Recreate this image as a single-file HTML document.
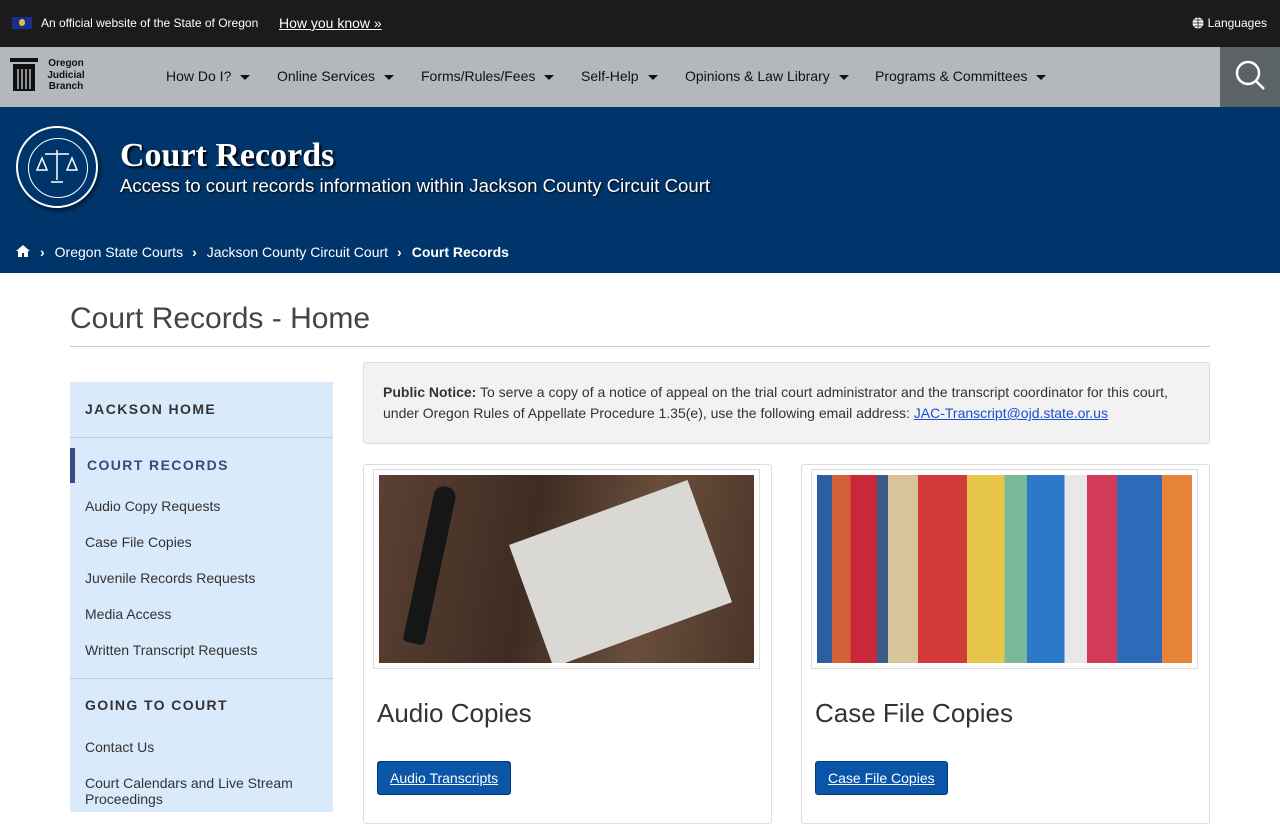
<!DOCTYPE html>
<html><head><meta charset="utf-8"><style>
*{box-sizing:border-box;margin:0;padding:0}
body{width:1280px;height:800px;overflow:hidden;font-family:"Liberation Sans",Arial,sans-serif;background:#fff;color:#333}
.top{height:47px;background:#1b1b1b;color:#fff;position:relative;font-size:12px}
.top .flag{position:absolute;left:12px;top:17px;width:20px;height:12px;background:#1a2f8c}
.top .flag:after{content:"";position:absolute;left:7px;top:2px;width:6px;height:7px;background:#e0c040;border-radius:50%}
.top .off{position:absolute;left:41px;top:16px}
.top .how{position:absolute;left:279px;top:15px;font-size:14px;text-decoration:underline}
.top .lang{position:absolute;right:13px;top:16px}
.nav{height:60px;background:#b2b8bb;position:relative;font-size:14px;color:#111}
.nav .logo{position:absolute;left:10px;top:11px}
.nav .lt{position:absolute;left:45px;top:11px;font-size:10px;font-weight:bold;line-height:11.5px;text-align:center;width:42px}
.nav .item{position:absolute;top:21px}
.nav .item:after{content:"";display:inline-block;margin-left:9px;border:5px solid transparent;border-top:5px solid #111;border-bottom:0;vertical-align:middle}
.srch{position:absolute;right:0;top:0;width:60px;height:60px;background:#5c6366}
.banner{height:166px;background:#00356b;position:relative;color:#fff}
.seal{position:absolute;left:16px;top:19px;width:82px;height:82px;border-radius:50%;border:2px solid #fff;box-shadow:2px 3px 4px rgba(0,0,0,.5)}
.seal:before{content:"";position:absolute;left:10px;top:10px;width:58px;height:58px;border-radius:50%;border:1px solid #fff}
.banner h1{position:absolute;left:120px;top:30px;font-family:"Liberation Serif",serif;font-size:34px;font-weight:bold;text-shadow:2px 2px 2px #000}
.banner .s{position:absolute;left:120px;top:68px;font-size:18.6px;text-shadow:1px 1px 2px #000}
.bc{position:absolute;left:15px;top:137px;font-size:14px}
.bc .ch{margin:0 10px 0 9px;font-size:14px;font-weight:bold}
h2.page{position:absolute;left:70px;top:302px;font-size:30px;font-weight:normal;color:#444}
.hr{position:absolute;left:70px;top:346px;width:1140px;height:1px;background:#ccc}
.side{position:absolute;left:70px;top:382px;width:263px;height:430px;background:#d9eafb;font-size:14px;color:#333}
.side .h{position:absolute;left:15px;font-weight:bold;letter-spacing:1.4px;font-size:14px;color:#333}
.side .l{position:absolute;left:15px}
.side .sep{position:absolute;left:0;width:263px;height:1px;background:#b8cbe0}
.notice{position:absolute;left:363px;top:362px;width:847px;height:82px;background:#f2f2f2;border:1px solid #ddd;border-radius:3px;padding:19px 19px;font-size:14px;line-height:21px;color:#333}
.notice a{color:#1a4fd0}
.card{position:absolute;top:464px;width:409px;height:360px;border:1px solid #ddd;border-radius:3px}
.card .im{position:absolute;left:9px;top:4px;width:387px;height:200px;border:1px solid #ddd;padding:5px}
.card .im>div{width:100%;height:100%;overflow:hidden;position:relative}
.card h3{position:absolute;left:13px;top:233px;font-size:26px;font-weight:normal;color:#333}
.btn{position:absolute;left:13px;top:296px;padding:8px 12px;background:#0a55a8;color:#fff;font-size:14px;text-decoration:underline;border:1px solid #043a78;border-radius:3px}
</style></head><body>
<div class="top"><div class="flag"></div><div class="off">An official website of the State of Oregon</div><div class="how">How you know »</div>
<div class="lang"><svg width="12" height="12" viewBox="0 0 12 12" style="vertical-align:-2px;margin-right:4px"><circle cx="6" cy="6" r="5.5" fill="#fff"/><path d="M0.5 6h11M6 .5v11M2 3h8M2 9h8" stroke="#1b1b1b" stroke-width=".8"/></svg>Languages</div></div>
<div class="nav">
<svg class="logo" width="30" height="36" viewBox="0 0 30 36"><rect x="0" y="0" width="28" height="4" fill="#111"/><rect x="3" y="6" width="22" height="3" fill="#111"/><rect x="3" y="9" width="22" height="24" fill="#111"/><path d="M8 11v20M12 11v20M16 11v20M20 11v20" stroke="#b2b8bb" stroke-width="1.5"/></svg>
<div class="lt">Oregon Judicial Branch</div>
<div class="item" style="left:166px">How Do I?</div>
<div class="item" style="left:277px">Online Services</div>
<div class="item" style="left:421px">Forms/Rules/Fees</div>
<div class="item" style="left:581px">Self-Help</div>
<div class="item" style="left:685px">Opinions &amp; Law Library</div>
<div class="item" style="left:875px">Programs &amp; Committees</div>
<div class="srch"><svg width="60" height="60" viewBox="0 0 60 60"><circle cx="28" cy="26" r="11" fill="none" stroke="#fff" stroke-width="2.5"/><path d="M36 34l8 8" stroke="#fff" stroke-width="2.5"/></svg></div>
</div>
<div class="banner">
<div class="seal"><svg width="78" height="78" viewBox="0 0 78 78" style="position:absolute;left:0;top:0"><path d="M39 22v30M27 26h24M24 30l-5 12h10zM54 30l-5 12h10zM33 54h12" stroke="#fff" stroke-width="1.5" fill="none"/></svg></div>
<h1>Court Records</h1>
<div class="s">Access to court records information within Jackson County Circuit Court</div>
<div class="bc"><svg width="16" height="14" viewBox="0 0 16 14" style="vertical-align:-1px"><path d="M8 1L1 7h2v6h4V9h2v4h4V7h2z" fill="#fff"/></svg><span class="ch">›</span>Oregon State Courts<span class="ch">›</span>Jackson County Circuit Court<span class="ch">›</span><b>Court Records</b></div>
</div>
<h2 class="page">Court Records - Home</h2><div class="hr"></div>
<div class="side">
<div class="h" style="top:19px">JACKSON HOME</div>
<div class="sep" style="top:55px"></div>
<div style="position:absolute;left:0;top:66px;width:5px;height:35px;background:#3a4a8a"></div>
<div class="h" style="top:75px;left:17px;color:#3a4a7a">COURT RECORDS</div>
<div class="l" style="top:116px">Audio Copy Requests</div>
<div class="l" style="top:152px">Case File Copies</div>
<div class="l" style="top:188px">Juvenile Records Requests</div>
<div class="l" style="top:224px">Media Access</div>
<div class="l" style="top:260px">Written Transcript Requests</div>
<div class="sep" style="top:296px"></div>
<div class="h" style="top:315px">GOING TO COURT</div>
<div class="l" style="top:357px">Contact Us</div>
<div class="l" style="top:393px;line-height:16px">Court Calendars and Live Stream<br>Proceedings</div>
</div>
<div class="notice"><b>Public Notice:</b> To serve a copy of a notice of appeal on the trial court administrator and the transcript coordinator for this court, under Oregon Rules of Appellate Procedure 1.35(e), use the following email address: <a href="#">JAC-Transcript@ojd.state.or.us</a></div>
<div class="card" style="left:363px"><div class="im"><div style="background:linear-gradient(100deg,#5a4132,#3e2c22 40%,#6a4e3c 70%,#4a3528)">
<div style="position:absolute;left:130px;top:70px;width:190px;height:130px;background:#d9d8d4;transform:rotate(-20deg);transform-origin:0 0"></div>
<div style="position:absolute;left:40px;top:10px;width:22px;height:160px;background:#161616;transform:rotate(12deg);border-radius:10px 10px 4px 4px"></div></div></div>
<h3>Audio Copies</h3><a class="btn" href="#">Audio Transcripts</a></div>
<div class="card" style="left:801px"><div class="im"><div style="background:linear-gradient(90deg,#2d5fa0 0 4%,#d4603a 4% 9%,#c8283a 9% 16%,#3a5a8a 16% 19%,#d8c49a 19% 27%,#d23a3a 27% 40%,#e7c64a 40% 50%,#7ab89a 50% 56%,#2c78c8 56% 66%,#e8e8e8 66% 72%,#d23a5a 72% 80%,#2d6ab8 80% 92%,#e8843a 92%)"></div></div>
<h3>Case File Copies</h3><a class="btn" href="#">Case File Copies</a></div>
</body></html>
